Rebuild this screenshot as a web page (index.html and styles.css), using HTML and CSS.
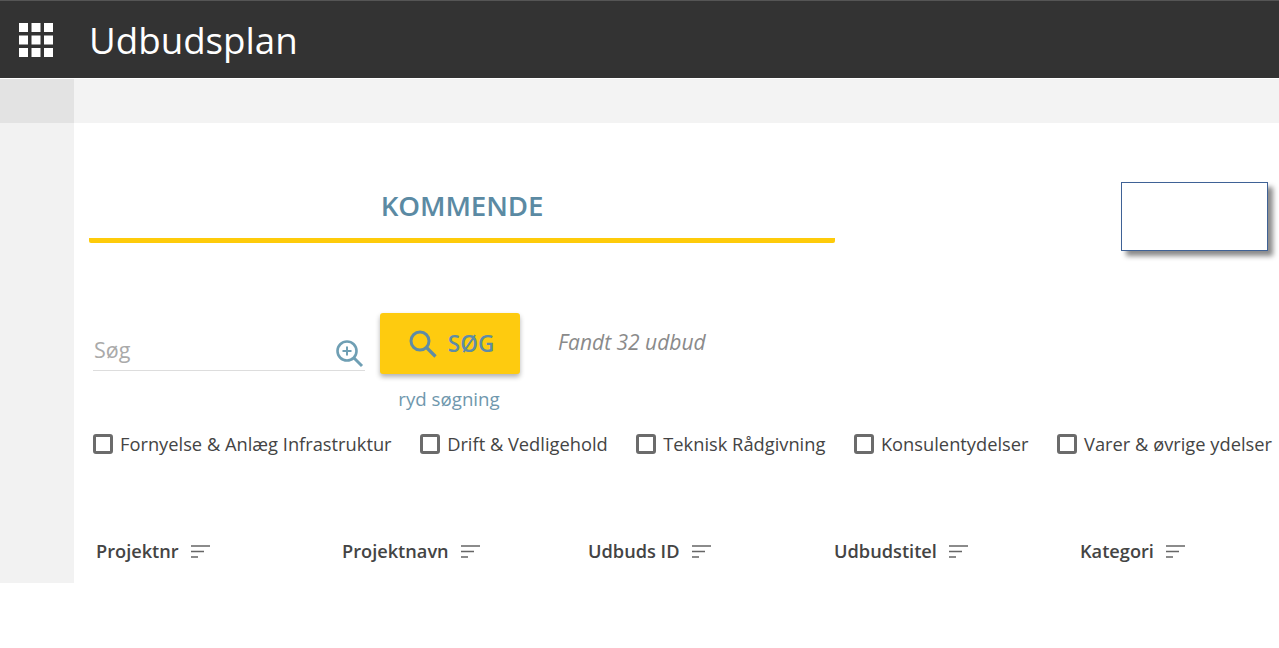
FILE: index.html
```html
<!DOCTYPE html>
<html lang="da">
<head>
  <meta charset="UTF-8" />
  <meta name="viewport" content="width=device-width, initial-scale=1" />
  <title>Udbudsplan</title>
  <link rel="stylesheet" href="styles.css">
</head>
<body>
  <header class="topbar">
    <svg class="apps" width="34" height="34" viewBox="0 0 34 34" aria-hidden="true">
      <rect x="0" y="0" width="9" height="9" /><rect x="12.5" y="0" width="9" height="9" /><rect x="25" y="0" width="9" height="9" />
      <rect x="0" y="12.5" width="9" height="9" /><rect x="12.5" y="12.5" width="9" height="9" /><rect x="25" y="12.5" width="9" height="9" />
      <rect x="0" y="25" width="9" height="9" /><rect x="12.5" y="25" width="9" height="9" /><rect x="25" y="25" width="9" height="9" />
    </svg>
    <h1>Udbudsplan</h1>
  </header>

  <div class="subbar"><div class="subbar-side"></div></div>

  <div class="layout">
    <aside class="side"></aside>
    <main class="content">
      <div class="tabs">
        <div class="tab">KOMMENDE</div>
        <div class="notice"></div>
      </div>

      <div class="search-row">
        <div class="search-field">
          <span class="placeholder">Søg</span>
          <svg width="30" height="30" viewBox="0 0 30 30" fill="none" stroke="#6f9fb4" aria-hidden="true">
            <circle cx="12" cy="12" r="9.5" stroke-width="2.6" />
            <path d="M19 19l8 8" stroke-width="3" />
            <path d="M12 7.5v9M7.5 12h9" stroke-width="2" />
          </svg>
        </div>
        <div class="search-action">
          <button class="search-btn" type="button">
            <svg width="30" height="30" viewBox="0 0 30 30" fill="none" stroke="#5f8ca5" aria-hidden="true">
              <circle cx="12" cy="12" r="9" stroke-width="3" />
              <path d="M18.5 18.5l9 9" stroke-width="3.2" />
            </svg>
            SØG
          </button>
          <a class="clear" href="#">ryd søgning</a>
        </div>
        <div class="result">Fandt 32 udbud</div>
      </div>

      <div class="filters">
        <label class="filter"><span class="box"></span>Fornyelse &amp; Anlæg Infrastruktur</label>
        <label class="filter"><span class="box"></span>Drift &amp; Vedligehold</label>
        <label class="filter"><span class="box"></span>Teknisk Rådgivning</label>
        <label class="filter"><span class="box"></span>Konsulentydelser</label>
        <label class="filter"><span class="box"></span>Varer &amp; øvrige ydelser</label>
      </div>

      <div class="table-head">
        <div class="th">Projektnr <svg class="sort" width="20" height="13" viewBox="0 0 20 13"><path d="M0 1h19M0 6.5h13M0 12h7" /></svg></div>
        <div class="th">Projektnavn <svg class="sort" width="20" height="13" viewBox="0 0 20 13"><path d="M0 1h19M0 6.5h13M0 12h7" /></svg></div>
        <div class="th">Udbuds ID <svg class="sort" width="20" height="13" viewBox="0 0 20 13"><path d="M0 1h19M0 6.5h13M0 12h7" /></svg></div>
        <div class="th">Udbudstitel <svg class="sort" width="20" height="13" viewBox="0 0 20 13"><path d="M0 1h19M0 6.5h13M0 12h7" /></svg></div>
        <div class="th">Kategori <svg class="sort" width="20" height="13" viewBox="0 0 20 13"><path d="M0 1h19M0 6.5h13M0 12h7" /></svg></div>
      </div>
    </main>
  </div>
</body>
</html>
```

FILE: styles.css
```css
html, body {
  margin: 0;
  padding: 0;
  background: #fff;
}

body {
  font-family: "Open Sans", Arial, sans-serif;
  color: #444;
  overflow: hidden;
}

.topbar {
  display: flex;
  align-items: center;
  height: 77px;
  background: #333;
  border-top: 1px solid #555;
  padding-left: 19px;
}

.apps {
  fill: #fff;
  flex: none;
}

.topbar h1 {
  margin: 0 0 0 36px;
  font-size: 36.7px;
  font-weight: 400;
  color: #fff;
}

.subbar {
  height: 44px;
  margin-top: 1px;
  background: #f3f3f3;
}

.subbar-side {
  width: 74px;
  height: 100%;
  background: #e3e3e3;
}

.layout {
  display: flex;
  height: 460px;
}

.side {
  width: 74px;
  flex: none;
  background: #f2f2f2;
}

.content {
  flex: 1;
  padding: 59px 11px 0 15px;
  min-width: 0;
}

.tabs {
  display: flex;
  justify-content: space-between;
  align-items: flex-start;
}

.tab {
  width: 746px;
  height: 56px;
  line-height: 46px;
  border-bottom: 5px solid #fecb0a;
  border-radius: 0 0 2px 2px;
  text-align: center;
  font-size: 27.7px;
  font-weight: 600;
  letter-spacing: -0.1px;
  color: #5b8aa3;
}

.notice {
  box-sizing: border-box;
  width: 147px;
  height: 69px;
  background: #fff;
  border: 1.5px solid #3f6296;
  box-shadow: 5px 5px 5px #8a8a8a;
}

.search-row {
  display: flex;
  align-items: flex-start;
  margin-top: 62px;
  padding-left: 4px;
}

.search-field {
  display: flex;
  align-items: flex-start;
  justify-content: space-between;
  box-sizing: border-box;
  width: 272px;
  height: 58px;
  padding: 21px 0 0 1px;
  border-bottom: 1px solid #ddd;
}

.placeholder {
  font-size: 21.5px;
  line-height: 32px;
  color: #aaa;
}

.search-field svg {
  margin-top: 5px;
}

.search-action {
  display: flex;
  flex-direction: column;
  align-items: center;
  margin-left: 15px;
}

.search-btn {
  display: flex;
  align-items: center;
  justify-content: center;
  gap: 10px;
  width: 140px;
  height: 61px;
  padding: 0 0 0 2px;
  border: 0;
  border-radius: 3px;
  background: #fecb0f;
  box-shadow: 0 3px 5px rgba(0, 0, 0, 0.3);
  font-family: inherit;
  font-size: 22.5px;
  font-weight: 600;
  color: #5f8ca5;
}

.clear {
  margin: 12px 2px 0 0;
  font-size: 18.7px;
  line-height: 26px;
  color: #6f97ad;
  text-decoration: none;
}

.result {
  margin: 15px 0 0 38px;
  font-size: 21px;
  font-style: italic;
  color: #8a8a8a;
}

.filters {
  display: flex;
  justify-content: space-between;
  margin: 19px -4px 0 0;
  padding-left: 4px;
}

.filter {
  display: flex;
  align-items: center;
  gap: 7px;
  font-size: 18.3px;
  color: #444;
  white-space: nowrap;
}

.box {
  box-sizing: border-box;
  width: 20px;
  height: 20px;
  border: 3px solid #6b6b6b;
  border-radius: 3px;
}

.table-head {
  display: grid;
  grid-template-columns: repeat(5, 246px);
  margin-top: 83px;
  padding-left: 7px;
}

.th {
  display: flex;
  align-items: center;
  gap: 8px;
  font-size: 18.2px;
  font-weight: 600;
  color: #444;
}

.sort {
  margin-left: 4px;
  fill: none;
  stroke: #666;
  stroke-width: 1.3;
}
```
